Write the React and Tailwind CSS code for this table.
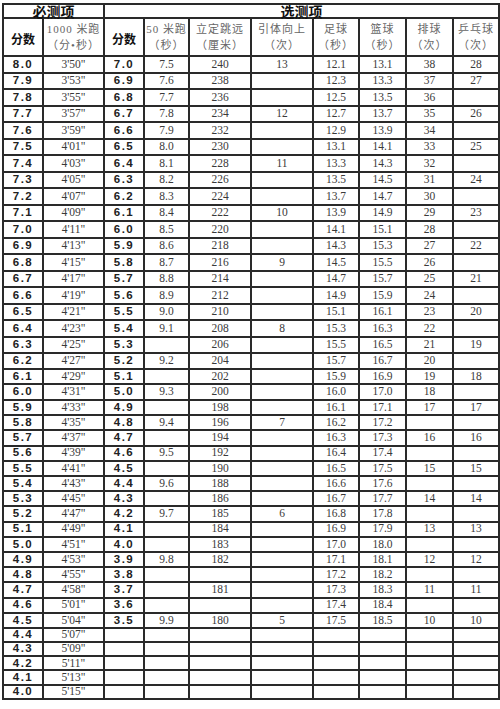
import React from 'react';

// 分数, 1000米跑, 分数, 50米跑, 立定跳远, 引体向上, 足球, 篮球, 排球, 乒乓球
const rows = [
  ['8.0', "3'50\"", '7.0', '7.5', '240', '13', '12.1', '13.1', '38', '28'],
  ['7.9', "3'53\"", '6.9', '7.6', '238', '', '12.3', '13.3', '37', '27'],
  ['7.8', "3'55\"", '6.8', '7.7', '236', '', '12.5', '13.5', '36', ''],
  ['7.7', "3'57\"", '6.7', '7.8', '234', '12', '12.7', '13.7', '35', '26'],
  ['7.6', "3'59\"", '6.6', '7.9', '232', '', '12.9', '13.9', '34', ''],
  ['7.5', "4'01\"", '6.5', '8.0', '230', '', '13.1', '14.1', '33', '25'],
  ['7.4', "4'03\"", '6.4', '8.1', '228', '11', '13.3', '14.3', '32', ''],
  ['7.3', "4'05\"", '6.3', '8.2', '226', '', '13.5', '14.5', '31', '24'],
  ['7.2', "4'07\"", '6.2', '8.3', '224', '', '13.7', '14.7', '30', ''],
  ['7.1', "4'09\"", '6.1', '8.4', '222', '10', '13.9', '14.9', '29', '23'],
  ['7.0', "4'11\"", '6.0', '8.5', '220', '', '14.1', '15.1', '28', ''],
  ['6.9', "4'13\"", '5.9', '8.6', '218', '', '14.3', '15.3', '27', '22'],
  ['6.8', "4'15\"", '5.8', '8.7', '216', '9', '14.5', '15.5', '26', ''],
  ['6.7', "4'17\"", '5.7', '8.8', '214', '', '14.7', '15.7', '25', '21'],
  ['6.6', "4'19\"", '5.6', '8.9', '212', '', '14.9', '15.9', '24', ''],
  ['6.5', "4'21\"", '5.5', '9.0', '210', '', '15.1', '16.1', '23', '20'],
  ['6.4', "4'23\"", '5.4', '9.1', '208', '8', '15.3', '16.3', '22', ''],
  ['6.3', "4'25\"", '5.3', '', '206', '', '15.5', '16.5', '21', '19'],
  ['6.2', "4'27\"", '5.2', '9.2', '204', '', '15.7', '16.7', '20', ''],
  ['6.1', "4'29\"", '5.1', '', '202', '', '15.9', '16.9', '19', '18'],
  ['6.0', "4'31\"", '5.0', '9.3', '200', '', '16.0', '17.0', '18', ''],
  ['5.9', "4'33\"", '4.9', '', '198', '', '16.1', '17.1', '17', '17'],
  ['5.8', "4'35\"", '4.8', '9.4', '196', '7', '16.2', '17.2', '', ''],
  ['5.7', "4'37\"", '4.7', '', '194', '', '16.3', '17.3', '16', '16'],
  ['5.6', "4'39\"", '4.6', '9.5', '192', '', '16.4', '17.4', '', ''],
  ['5.5', "4'41\"", '4.5', '', '190', '', '16.5', '17.5', '15', '15'],
  ['5.4', "4'43\"", '4.4', '9.6', '188', '', '16.6', '17.6', '', ''],
  ['5.3', "4'45\"", '4.3', '', '186', '', '16.7', '17.7', '14', '14'],
  ['5.2', "4'47\"", '4.2', '9.7', '185', '6', '16.8', '17.8', '', ''],
  ['5.1', "4'49\"", '4.1', '', '184', '', '16.9', '17.9', '13', '13'],
  ['5.0', "4'51\"", '4.0', '', '183', '', '17.0', '18.0', '', ''],
  ['4.9', "4'53\"", '3.9', '9.8', '182', '', '17.1', '18.1', '12', '12'],
  ['4.8', "4'55\"", '3.8', '', '', '', '17.2', '18.2', '', ''],
  ['4.7', "4'58\"", '3.7', '', '181', '', '17.3', '18.3', '11', '11'],
  ['4.6', "5'01\"", '3.6', '', '', '', '17.4', '18.4', '', ''],
  ['4.5', "5'04\"", '3.5', '9.9', '180', '5', '17.5', '18.5', '10', '10'],
  ['4.4', "5'07\"", '', '', '', '', '', '', '', ''],
  ['4.3', "5'09\"", '', '', '', '', '', '', '', ''],
  ['4.2', "5'11\"", '', '', '', '', '', '', '', ''],
  ['4.1', "5'13\"", '', '', '', '', '', '', '', ''],
  ['4.0', "5'15\"", '', '', '', '', '', '', '', ''],
];

// the scan's rows shrink a little towards the bottom
function rowHeight(i) {
  if (i < 18) return 'h-[16.5px]';
  if (i < 21) return 'h-[15.7px]';
  if (i < 36) return 'h-[15.2px]';
  return 'h-[14.2px]';
}

const cell = 'border-2 border-[#2a2a2a] p-0 text-center align-middle whitespace-nowrap';
const scoreCls = `${cell} leading-none font-['Liberation_Sans',sans-serif] font-bold text-[11.5px] tracking-[1.5px] text-[#222]`;
const dataCls = `${cell} leading-none font-['Liberation_Serif',serif] text-[11.5px] text-[#3a3a3a]`;
const headCls = `${cell} font-normal font-['Liberation_Serif','Noto_Sans_CJK_SC',sans-serif] text-[11px] text-[#666] tracking-[1px]`;
const boldHead = `${cell} font-['Noto_Sans_CJK_SC',sans-serif] font-bold text-[#111]`;

function Head({ top, bottom }) {
  return (
    <th className={headCls}>
      <div className="flex flex-col items-center gap-[4px] pb-[1px] leading-[12px]">
        <span>{top}</span>
        <span>{bottom}</span>
      </div>
    </th>
  );
}

export default function App() {
  return (
    <div className="bg-white w-[500px] h-[709px] pt-[3px] pl-[2px]">
      <table className="w-[496px] table-fixed border-collapse">
        <colgroup>
          <col className="w-[40px]" />
          <col className="w-[61px]" />
          <col className="w-[40px]" />
          <col className="w-[45px]" />
          <col className="w-[62px]" />
          <col className="w-[62px]" />
          <col className="w-[46px]" />
          <col className="w-[47px]" />
          <col className="w-[47px]" />
          <col className="w-[46px]" />
        </colgroup>
        <thead>
          <tr className="h-[14px]">
            <th colSpan={2} className={`${boldHead} text-[14px] leading-[12px]`}>
              必测项
            </th>
            <th colSpan={8} className={`${boldHead} text-[14px] leading-[12px]`}>
              选测项
            </th>
          </tr>
          <tr className="h-[38px]">
            <th className={`${boldHead} text-[12px] leading-none pt-[4px]`}>分数</th>
            <Head top="1000 米跑" bottom="（分•秒）" />
            <th className={`${boldHead} text-[12px] leading-none pt-[4px]`}>分数</th>
            <Head top="50 米跑" bottom="（秒）" />
            <Head top="立定跳远" bottom="（厘米）" />
            <Head top="引体向上" bottom="（次）" />
            <Head top="足球" bottom="（秒）" />
            <Head top="篮球" bottom="（秒）" />
            <Head top="排球" bottom="（次）" />
            <Head top="乒乓球" bottom="（次）" />
          </tr>
        </thead>
        <tbody>
          {rows.map((r, i) => (
            <tr key={r[0]} className={rowHeight(i)}>
              <td className={scoreCls}>{r[0]}</td>
              <td className={dataCls}>{r[1]}</td>
              <td className={scoreCls}>{r[2]}</td>
              <td className={dataCls}>{r[3]}</td>
              <td className={dataCls}>{r[4]}</td>
              <td className={dataCls}>{r[5]}</td>
              <td className={dataCls}>{r[6]}</td>
              <td className={dataCls}>{r[7]}</td>
              <td className={dataCls}>{r[8]}</td>
              <td className={dataCls}>{r[9]}</td>
            </tr>
          ))}
        </tbody>
      </table>
    </div>
  );
}
